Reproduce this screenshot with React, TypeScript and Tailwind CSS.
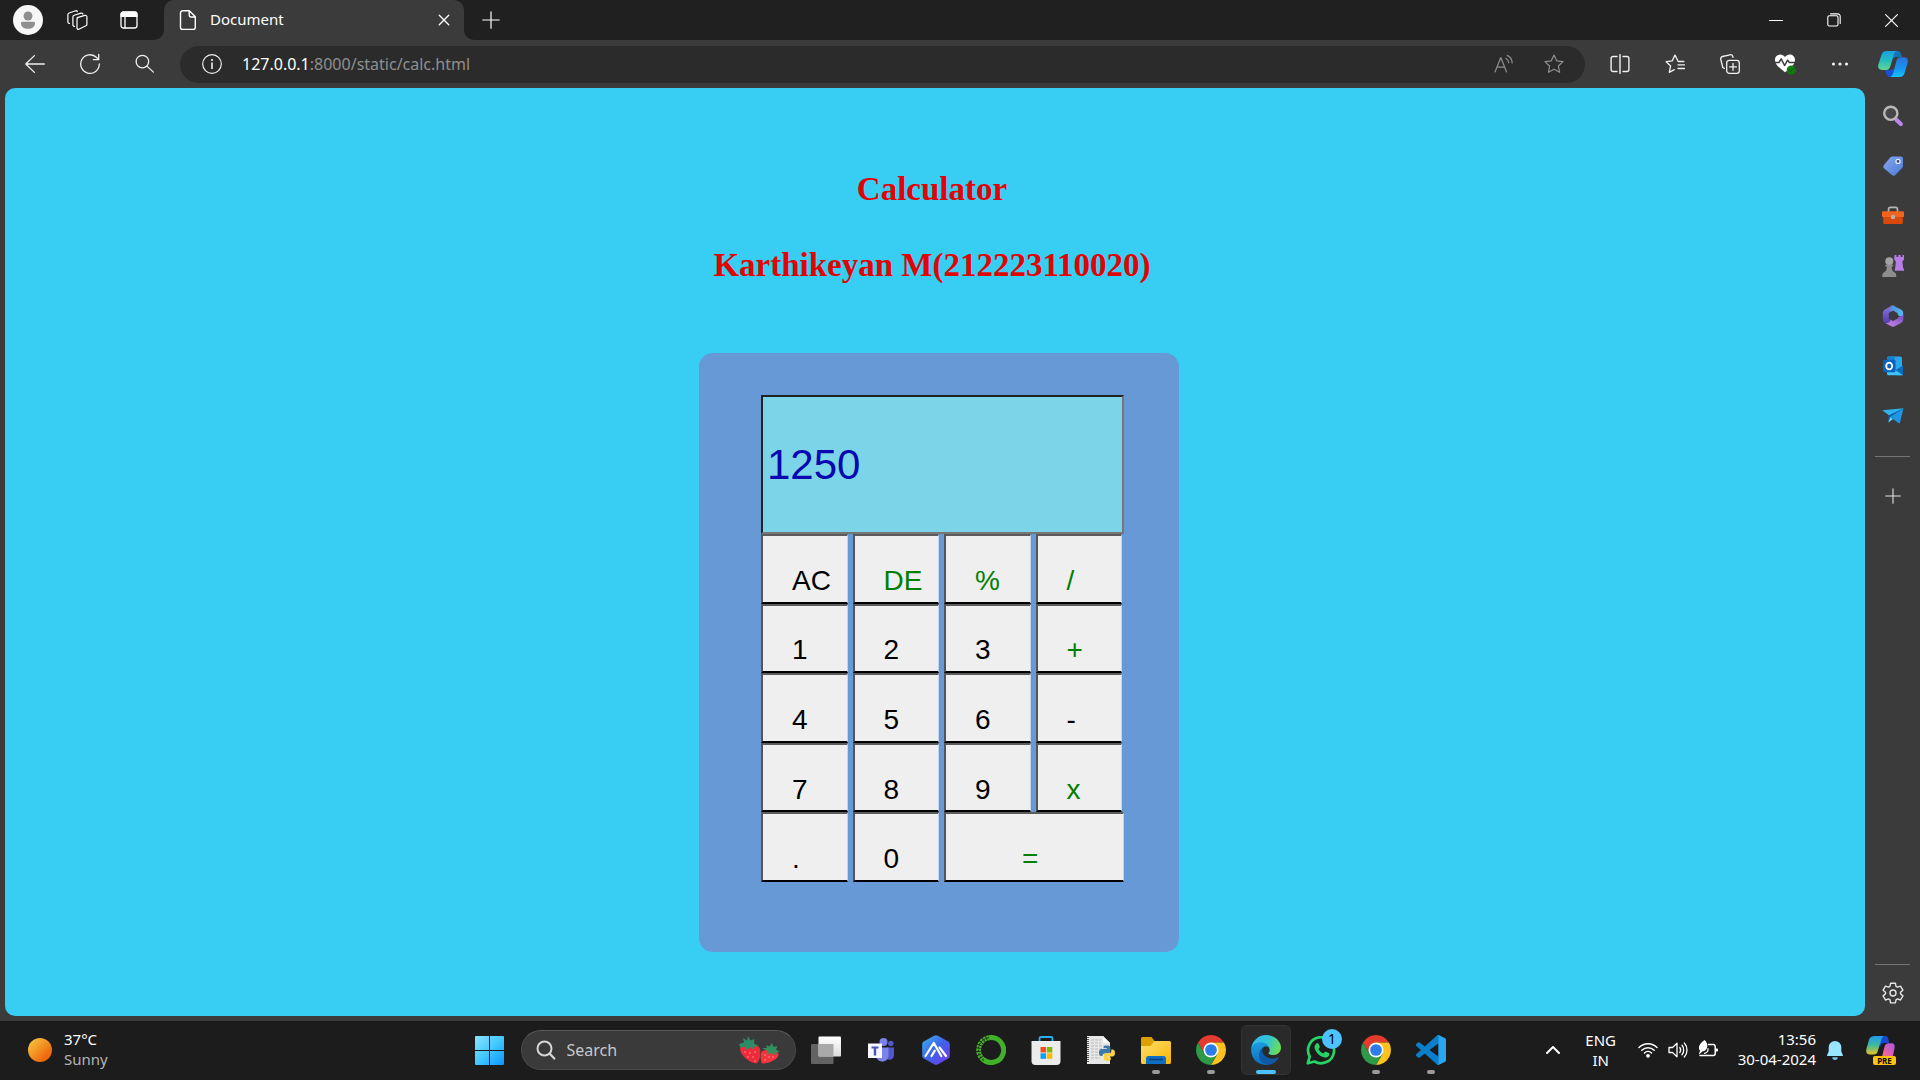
import React from "react";

type IconProps = { className?: string };

const line = {
  fill: "none",
  stroke: "currentColor",
  strokeLinecap: "round" as const,
  strokeLinejoin: "round" as const,
};

function Svg({ size, box, children, className = "" }: { size: number; box?: string; children: React.ReactNode; className?: string }) {
  return (
    <svg width={size} height={size} viewBox={box ?? `0 0 ${size} ${size}`} className={`shrink-0 ${className}`} aria-hidden="true">
      {children}
    </svg>
  );
}

/* ---------- browser icons ---------- */

const AvatarIcon = () => (
  <Svg size={30}>
    <circle cx="15" cy="15" r="15" fill="#f7f7f7" />
    <circle cx="15" cy="11" r="4.5" fill="#8f8f8f" />
    <path d="M8 18.2c0-.8.6-1.4 1.4-1.4h11.2c.8 0 1.4.6 1.4 1.4 0 3.6-3 5.6-7 5.6s-7-2-7-5.6z" fill="#8f8f8f" />
  </Svg>
);

const WorkspacesIcon = () => (
  <Svg size={22}>
    <g {...line} strokeWidth="1.2">
      <path d="M11.2 8.6 19 6.4c1-.3 1.9.4 1.9 1.4v7.600c0 .7-.4 1.200-1 1.400l-7 3.400c-.9.4-1.900-.2-1.900-1.200v-8.900c0-.7.5-1.300 1.200-1.500z" />
      <path d="M8.500 17.300c-.9.2-1.600-.4-1.600-1.300V7.800c0-.7.5-1.300 1.200-1.500l7-2.200c.8-.2 1.600.2 1.800 1" />
      <path d="M4.500 14.700c-.9.1-1.600-.5-1.600-1.300V5.800c0-.7.500-1.300 1.200-1.500l6.500-2.200c.8-.2 1.500.1 1.700.8" transform="translate(-1 -.3)" />
    </g>
  </Svg>
);

const TabActionsIcon = () => (
  <Svg size={18}>
    <rect x="1" y="1" width="16" height="16" rx="2.500" {...line} strokeWidth="1.300" />
    <path d="M.5 6V3A2.500 2.500 0 0 1 3 .5h12A2.500 2.500 0 0 1 17.500 3v3z" fill="currentColor" />
    <path d="M5 6v11" {...line} strokeWidth="1.300" />
  </Svg>
);

const FileIcon = () => (
  <Svg size={20}>
    <path d="M4.500.8h6.800L17.300 6.800v10.600a2 2 0 0 1-2 2H4.500a2 2 0 0 1-2-2V2.800a2 2 0 0 1 2-2zM11.200 1v4.300c0 1 .7 1.700 1.700 1.700h4.200" {...line} strokeWidth="1.400" />
  </Svg>
);

const CrossIcon = ({ size, w }: { size: number; w: number }) => (
  <Svg size={size} box="0 0 14 14">
    <path d="m1.500 1.500 11 11m0-11-11 11" {...line} strokeWidth={w} />
  </Svg>
);

const PlusIcon = ({ size }: { size: number }) => (
  <Svg size={size} box="0 0 18 18">
    <path d="M9 .8v16.400M.8 9h16.400" {...line} strokeWidth="1.200" />
  </Svg>
);

const MinimizeIcon = () => (
  <Svg size={14}>
    <path d="M.5 7.500h13" {...line} strokeWidth="1.100" />
  </Svg>
);

const RestoreIcon = () => (
  <Svg size={14}>
    <g {...line} strokeWidth="1.100">
      <rect x=".8" y="2.800" width="10.200" height="10.200" rx="1.500" />
      <path d="M3.600.9h7.200a2.400 2.400 0 0 1 2.400 2.400v7.200" />
    </g>
  </Svg>
);

const BackIcon = () => (
  <Svg size={20}>
    <path d="M19.400 10H.8M9.400 1.600.8 10l8.600 8.400" {...line} strokeWidth="1.300" />
  </Svg>
);

const ReloadIcon = () => (
  <Svg size={22}>
    <path d="M20.300 11A9.300 9.300 0 1 1 17.600 4.500l2 2M19.700 1.300v5.400h-5.400" {...line} strokeWidth="1.300" />
  </Svg>
);

const SearchIcon = () => (
  <Svg size={20}>
    <path d="M13.700 7.600a6.300 6.300 0 1 1-12.600 0 6.300 6.300 0 0 1 12.600 0zM12 12.100l6.400 6" {...line} strokeWidth="1.300" />
  </Svg>
);

const InfoIcon = () => (
  <Svg size={20}>
    <circle cx="10" cy="10" r="9.300" {...line} strokeWidth="1.200" />
    <path d="M10 9v5.500" {...line} strokeWidth="1.600" />
    <circle cx="10" cy="6" r="1.100" fill="currentColor" />
  </Svg>
);

const ReadAloudIcon = () => (
  <Svg size={20}>
    <path d="M1 18 6.800 3.500 12.600 18M3 13.200h7.700M12 4.400c1.700 1 2.600 2.400 2.700 4.300M13.300 1.400c3 1.500 4.800 4.200 4.900 7.600" {...line} strokeWidth="1.200" />
  </Svg>
);

const StarIcon = () => (
  <Svg size={20}>
    <path d="m10 1 2.700 5.800 6.300.8-4.600 4.400 1.200 6.300L10 15.200l-5.600 3.100L5.600 12 1 7.600l6.300-.8z" {...line} strokeWidth="1.200" />
  </Svg>
);

const SplitIcon = () => (
  <Svg size={20}>
    <path d="M7 2.500H3A1.900 1.900 0 0 0 1.100 4.400v11.200A1.900 1.900 0 0 0 3 17.500h4M13 2.500h4a1.900 1.900 0 0 1 1.900 1.900v11.200a1.900 1.900 0 0 1-1.900 1.900h-4M10 .6v18.800" {...line} strokeWidth="1.400" />
  </Svg>
);

const FavoritesIcon = () => (
  <Svg size={20}>
    <path d="M18.800 7.500h-5.600L10 1 7.200 6.900l-6 .8 4.400 4.300-1.300 6.300 5-2.600M13 10.800h6.500M13 14.500h6.500" {...line} strokeWidth="1.300" />
  </Svg>
);

const CollectionsIcon = () => (
  <Svg size={20}>
    <g {...line} strokeWidth="1.300">
      <rect x="6.700" y="6.300" width="12.600" height="13" rx="2.600" />
      <path d="M13 9.500v6.800M9.600 12.900h6.800M4.300 14.400 2.800 13.500.8 5.500a2.400 2.400 0 0 1 1.700-3L9.900.8a2.400 2.400 0 0 1 2.900 1.700l.2.9" />
    </g>
  </Svg>
);

const HealthIcon = () => (
  <Svg size={22}>
    <path d="M11 4C8-.6.800 1.200 1 7.200c.1 4.800 5.600 8.600 10 12 4.400-3.400 9.900-7.200 10-12C21.200 1.200 14 -.6 11 4z" fill="#fff" />
    <path d="M0 9.500h5l2.200-3.600 3.400 6.600 3-5.300 1.800 2.300H22" {...line} stroke="#3b3b3b" strokeWidth="1.500" />
    <circle cx="17.300" cy="17" r="4.600" fill="#107c10" />
    <path d="m15.600 17 1.300 1.200 2.200-2.400" {...line} stroke="#0a400a" strokeWidth="1" />
  </Svg>
);

const DotsIcon = () => (
  <Svg size={18}>
    <g fill="currentColor">
      <circle cx="2.500" cy="9" r="1.600" />
      <circle cx="9" cy="9" r="1.600" />
      <circle cx="15.500" cy="9" r="1.600" />
    </g>
  </Svg>
);

const CopilotIcon = () => (
  <Svg size={30}>
    <defs>
      <linearGradient id="cpA" x1="0" y1="0" x2="0" y2="1">
        <stop offset="0" stopColor="#1a9fe0" />
        <stop offset=".5" stopColor="#24bcc0" />
        <stop offset="1" stopColor="#62d690" />
      </linearGradient>
      <linearGradient id="cpB" x1="0" y1="0" x2="0" y2="1">
        <stop offset="0" stopColor="#2a72dc" />
        <stop offset=".6" stopColor="#1597f0" />
        <stop offset="1" stopColor="#16c4f8" />
      </linearGradient>
    </defs>
    <path d="M15 2h4.500c2.300 0 3 1.500 3.600 3.300L24 8h-5.500c-3 0-4 2-4.800 5z" fill="#1673b8" />
    <path d="M15 28h-3c-2.500 0-3.300-1.800-4-4l-.8-3h5c3 0 3.700-1.500 4.500-4.500z" fill="#1c4fd8" />
    <path d="M8.500 2H19c-2 .5-2.600 2-3.300 4.200l-3.500 11.300c-.7 2.300-1.700 3.400-4 3.400H4c-3 0-4.500-2-3.700-5.200L3.400 6c.8-2.600 2.400-4 5.100-4z" fill="url(#cpA)" />
    <path d="M21.500 28H12c2-.5 2.700-2 3.300-4.200l3.200-12c.6-2.300 1.800-3.500 4-3.500H26c3 0 4.500 2 3.700 5.200L26.600 24c-.8 2.600-2.400 4-5.100 4z" fill="url(#cpB)" />
  </Svg>
);

/* ---------- sidebar icons ---------- */

const SideSearchIcon = () => (
  <Svg size={22}>
    <path d="m14.600 15 4.200 4" stroke="#bb86f0" strokeWidth="4.200" strokeLinecap="round" />
    <circle cx="8.800" cy="8.300" r="6.600" fill="#45454a" stroke="#b9b9b9" strokeWidth="2.400" />
  </Svg>
);

const ShoppingIcon = () => (
  <Svg size={22}>
    <defs>
      <linearGradient id="tag" x1="0" y1="0" x2="1" y2="1">
        <stop offset="0" stopColor="#86a8ee" />
        <stop offset="1" stopColor="#4c7ad8" />
      </linearGradient>
    </defs>
    <path d="M10.500 1.500h7.800a2.600 2.600 0 0 1 2.700 2.700v6.600c0 .9-.3 1.600-.9 2.200l-6.500 6.800c-1.200 1.200-2.800 1.200-4 0l-7.400-6.200c-1.200-1-1.200-2.600 0-3.800L8.200 2.600c.6-.7 1.400-1.100 2.300-1.100z" fill="url(#tag)" />
    <circle cx="16" cy="6.400" r="2" fill="#2d3d68" stroke="#e4ebfa" strokeWidth="1.300" />
  </Svg>
);

const ToolsIcon = () => (
  <Svg size={22}>
    <path d="M6.500 7V4.500C6.500 3 7.300 2.400 8.500 2.400h5c1.200 0 2 .6 2 2.100V7" fill="none" stroke="#b5b5b5" strokeWidth="1.700" />
    <rect x="1.200" y="11" width="19.600" height="8" rx="1.200" fill="#d9480c" />
    <rect x="0" y="6.300" width="22" height="5.800" rx="1.200" fill="#f0641e" />
    <circle cx="11" cy="12" r="2.200" fill="#b8b0ab" />
  </Svg>
);

const GamesIcon = () => (
  <Svg size={22}>
    <path d="M12.500 0h2v2h1.800V0h2.400v2h1.800V0h1.500v4.600l-1.600 2 .8 6.700c.8.400 1 1.100 1 2.500h-9.600l.6-2.700.600-6.500-1.600-2z" fill="#b67ce8" />
    <circle cx="7.300" cy="6.200" r="4" fill="#a3a3a3" />
    <path d="M3.300 9.800h8v1.800H9.700c0 3 .6 4.400 2.600 5.600 1.600.9 2 1.800 2 4.800H.2c0-3 .4-3.900 2-4.800 2-1.200 2.700-2.600 2.700-5.600H3.300z" fill="#8d8d8d" />
  </Svg>
);

const M365Icon = () => (
  <Svg size={22}>
    <defs>
      <linearGradient id="mA" x1="0" y1="0" x2="0" y2="1">
        <stop offset="0" stopColor="#8a78e0" />
        <stop offset="1" stopColor="#4f37a8" />
      </linearGradient>
      <linearGradient id="mB" x1="0" y1="1" x2="1" y2="0">
        <stop offset="0" stopColor="#d08ae0" />
        <stop offset="1" stopColor="#7b4bc8" />
      </linearGradient>
      <linearGradient id="mC" x1="0" y1="0" x2="1" y2="1">
        <stop offset="0" stopColor="#4a8fe0" />
        <stop offset="1" stopColor="#5cc0f5" />
      </linearGradient>
    </defs>
    <path d="M9.500.8 3 4.500C1.500 5.400.8 6.600.8 8.300v5.900c0 1.700.7 2.900 2.200 3.800l2.500 1.300 3.300-5V7.500l5-4.900L12 .9c-.9-.5-1.700-.6-2.500-.1z" fill="url(#mA)" />
    <path d="M9.500.8c.8-.5 1.700-.4 2.500.1l7 3.700c1.500.8 2.200 2 2.200 3.700v5l-5-3-5.200-3.500L8.800 8V3z" fill="url(#mC)" />
    <path d="M21.200 10v4.200c0 1.700-.7 2.900-2.200 3.700l-5.700 3.200c-1.500.9-3 .9-4.500 0L3 18c4 1 5.500-2.500 5.800-3.500l2.200.8 6-3.300z" fill="url(#mB)" />
    <path d="m11 5.500 4.700 2.800v5.200L11 16l-4.200-2.500V8z" fill="#3b3b3b" />
  </Svg>
);

const OutlookIcon = () => (
  <Svg size={22}>
    <rect x="5" y="1.500" width="15" height="17" rx="1.500" fill="#28a8ea" />
    <path d="M5 3a1.500 1.500 0 0 1 1.500-1.500h6V8H5z" fill="#1583d2" />
    <path d="m21 10.500-9 5.500 2 4.300h5.500a1.500 1.500 0 0 0 1.500-1.500z" fill="#1490df" />
    <path d="M5 12v6.800c0 .9.600 1.500 1.500 1.500H21L9 12.500z" fill="#3cc4f5" />
    <path d="m21 10.500-7 4.400 6.600 4.800.4-.9z" fill="#0f6cbd" />
    <rect x="1" y="4.800" width="12.500" height="12.500" rx="1.300" fill="#0a62bf" />
    <ellipse cx="7.200" cy="11" rx="3" ry="3.400" fill="none" stroke="#fff" strokeWidth="1.800" />
  </Svg>
);

const PlaneIcon = () => (
  <Svg size={22}>
    <path d="M.3 5.200 21.500 3.300 8 13.300l-1.200-3z" fill="#2fb1ec" />
    <path d="M21.500 3.300 6.500 10.500l-.2 7z" fill="#0b62a8" />
    <path d="M21.500 3.300 8.300 12l8.500 6.300c.6.300 1 .1 1.200-.6z" fill="#1e96e0" />
    <path d="M8.300 12 6.300 17.500l4.500-3.300z" fill="#6fd0f7" />
  </Svg>
);

const GearIcon = () => (
  <Svg size={24}>
    <g {...line} strokeWidth="1.400">
      <path d="M9.600 2.200h4.800l.6 3.100 1.500.9 3-1.100 2.400 4.100-2.400 2.100v1.500l2.400 2.100-2.400 4.100-3-1.100-1.500.9-.6 3.100H9.600L9 18.800l-1.500-.9-3 1.100-2.400-4.100 2.400-2.100v-1.500L2.100 9.200l2.400-4.100 3 1.100L9 5.300z" />
      <circle cx="12" cy="12" r="3" />
    </g>
  </Svg>
);

/* ---------- taskbar icons ---------- */

const StartIcon = () => (
  <Svg size={29}>
    <defs>
      <linearGradient id="win" gradientUnits="userSpaceOnUse" x1="0" y1="0" x2="29" y2="29">
        <stop offset="0" stopColor="#8ce2ff" />
        <stop offset=".5" stopColor="#43c8ff" />
        <stop offset="1" stopColor="#0a94ff" />
      </linearGradient>
    </defs>
    <path d="M1 0h13v14H0V1a1 1 0 0 1 1-1zM15 0h13a1 1 0 0 1 1 1v13H15zM0 15h14v14H1a1 1 0 0 1-1-1zM15 15h14v13a1 1 0 0 1-1 1H15z" fill="url(#win)" />
  </Svg>
);

const StrawberriesIcon = () => (
  <svg width="42" height="28" viewBox="0 0 42 28" className="shrink-0" aria-hidden="true">
    <path d="M1 12c3-5 18-5 20 1 1.500 6-1 13-3.500 14.500C11 27 1 20 1 12z" fill="#ee2b3c" />
    <path d="M22.500 16c3-4 15-2 17 2 .5 4-7 9-16 9.500-2-1-2.500-8-1-11.500z" fill="#f2343f" />
    <path d="m0 8 5-1.500L4 2l4 2.500L9 0l2.500 4.500 4-1.500L15 7.500l5 2.500-4.500.5L15 14l-4-3-3 3.500-1.500-4L1.500 12z" fill="#2f8a66" />
    <path d="m23 12 5 0-1-3 3.500 1.500L33 7l1.500 4 4-1-1.500 3.500 4 2.500-4 .5-.5 3-3.500-2.500-3.500 1.500-.5-3.500z" fill="#358f5c" />
    <g fill="#ffb08a">
      <circle cx="6" cy="16" r=".7" />
      <circle cx="11" cy="17" r=".7" />
      <circle cx="16" cy="16" r=".7" />
      <circle cx="9" cy="21" r=".7" />
      <circle cx="14" cy="21" r=".7" />
      <circle cx="16" cy="25" r=".7" />
      <circle cx="26" cy="19" r=".7" />
      <circle cx="30" cy="21" r=".7" />
      <circle cx="26" cy="24" r=".7" />
      <circle cx="34" cy="21" r=".7" />
    </g>
  </svg>
);

const TaskViewIcon = () => (
  <Svg size={30}>
    <defs>
      <linearGradient id="tv" x1="0" y1="0" x2="0" y2="1">
        <stop offset="0" stopColor="#fff" />
        <stop offset="1" stopColor="#dcdcdc" />
      </linearGradient>
    </defs>
    <rect x="0" y="9" width="22.500" height="20" rx="1" fill="#636363" />
    <rect x="7.500" y="1.500" width="22.500" height="20" rx="1" fill="url(#tv)" />
    <path d="M7.500 9h15v12.500h-14a1 1 0 0 1-1-1z" fill="#a9a9a9" />
  </Svg>
);

const TeamsIcon = () => (
  <Svg size={28}>
    <circle cx="16.500" cy="6" r="4" fill="#7b83eb" />
    <circle cx="23.800" cy="7.500" r="2.700" fill="#5059c9" />
    <path d="M20 11.500h7V19c0 3-2 4.800-4.600 4.800-1.500 0-2.400-.5-2.400-.5z" fill="#5059c9" />
    <path d="M10.500 11.500H21.500V19c0 3.800-2.600 6.500-6 6.500s-6-2.200-6.500-5.500z" fill="#7b83eb" />
    <rect x="1" y="7.500" width="14" height="14.500" fill="#f8f9ff" />
    <path d="M4.500 10.500h7v2H9.200v7H6.800v-7H4.500z" fill="#4b53bc" />
  </Svg>
);

const HexIcon = () => (
  <Svg size={30}>
    <defs>
      <linearGradient id="hex" x1="0" y1="0" x2="1" y2="1">
        <stop offset="0" stopColor="#3cb4ee" />
        <stop offset=".5" stopColor="#3f62e8" />
        <stop offset="1" stopColor="#7b35ec" />
      </linearGradient>
    </defs>
    <path d="M13 .8c1.300-.7 2.700-.7 4 0l9.800 5.400c1.300.7 2 1.800 2 3.300v11c0 1.500-.7 2.600-2 3.300L17 29.200c-1.300.7-2.700.7-4 0l-9.800-5.400c-1.300-.7-2-1.800-2-3.300v-11c0-1.500.7-2.600 2-3.300z" fill="url(#hex)" />
    <path d="M4.500 21 12.800 8l7.500 13M10.500 21l3.300-5.300M18.500 12.500 25 21" fill="none" stroke="#fff" strokeWidth="2.200" strokeLinecap="round" strokeLinejoin="round" />
  </Svg>
);

const AnacondaIcon = () => (
  <Svg size={30}>
    <path d="M13 2.700A12.500 12.500 0 1 1 7 24.500" fill="none" stroke="#43b02a" strokeWidth="5" />
    <path d="M7 24.500A12.500 12.500 0 0 1 13 2.700" fill="none" stroke="#43b02a" strokeWidth="5" strokeDasharray="2.400 .8" />
    <path d="M8 25.500A12.500 12.500 0 0 1 14 2.500" fill="none" stroke="#1d1d1d" strokeWidth="1" strokeDasharray="2 1.500" />
  </Svg>
);

const StoreIcon = () => (
  <Svg size={30}>
    <path d="M8.500 7V3.500A1.500 1.500 0 0 1 10 2h10a1.500 1.500 0 0 1 1.500 1.500V7" fill="none" stroke="#2ab0f2" strokeWidth="1.800" />
    <path d="M.5 6h29v20a4 4 0 0 1-4 4h-21a4 4 0 0 1-4-4z" fill="#ececec" />
    <path d="M9.500 12H15v5.500H9.500z" fill="#f25022" />
    <path d="M15.800 12h5.500v5.500h-5.500z" fill="#7fba00" />
    <path d="M9.500 18.300H15v5.500H9.500z" fill="#00a4ef" />
    <path d="M15.800 18.300h5.500v5.500h-5.500z" fill="#ffb900" />
  </Svg>
);

const PythonFileIcon = () => (
  <Svg size={30}>
    <path d="M1 1h16l7 7v21H1z" fill="#e6e6e6" />
    <path d="M17 1v7h7z" fill="#fafafa" />
    <path d="M2 2v26" stroke="#555" strokeWidth="2" strokeDasharray="1 1" />
    <path d="M5 5h10M5 8h10M5 11h16M5 14h12M5 17h9M5 20h9M5 23h9" stroke="#b9b9b9" strokeWidth="1" strokeDasharray="3 1" />
    <path d="M17.500 12.500c0-1.600 1.400-2 3.500-2s3.500.6 3.500 2.500v3.200c0 1.400-.9 2.200-2.300 2.200h-3.400c-1.600 0-2.400 1-2.400 2.700h-1.300c-1.500 0-2.100-1.500-2.100-3.600s.9-3.500 2.500-3.500h5.500v-.8h-3.500z" fill="#3c78aa" />
    <path d="M25.300 14.500h1.200c1.700 0 2.500 1.500 2.500 3.600s-.9 3.400-2.500 3.400h-5v.9h3.400v1.300c0 1.500-1.400 2.300-3.500 2.300s-3.600-.8-3.600-2.500v-3.200c0-1.200.9-2.100 2.300-2.100h3.300c1.200 0 1.900-1 1.900-2.400z" fill="#ffd342" />
  </Svg>
);

const FolderIcon = () => (
  <Svg size={30}>
    <defs>
      <linearGradient id="fold" x1="0" y1="0" x2="1" y2="1">
        <stop offset="0" stopColor="#ffdf70" />
        <stop offset="1" stopColor="#f7b500" />
      </linearGradient>
    </defs>
    <path d="M0 3.500A1.500 1.500 0 0 1 1.500 2h9l3 4H29v6H0z" fill="#dca000" />
    <path d="M0 11h9.500l4-5H28.500A1.500 1.500 0 0 1 30 7.500v20a1.500 1.500 0 0 1-1.500 1.500h-27A1.500 1.500 0 0 1 0 27.500z" fill="url(#fold)" />
    <path d="M5 29v-5.500A2.500 2.500 0 0 1 7.500 21h15a2.500 2.500 0 0 1 2.500 2.500V29z" fill="#0f6fc5" />
    <path d="M8.500 24.500h13" stroke="#053f7d" strokeWidth="1.300" strokeLinecap="round" />
  </Svg>
);

const ChromeIcon = () => (
  <Svg size={30} box="2 2 44 44">
    <path d="M4.950 13A22 22 0 0 1 43.050 13H24L14.470 29.500Z" fill="#e33b2e" />
    <path d="M43.050 13A22 22 0 0 1 24 46L33.530 29.500 24 13Z" fill="#fcc31e" />
    <path d="M24 46A22 22 0 0 1 4.950 13L14.470 29.500H33.530Z" fill="#2c9a47" />
    <circle cx="24" cy="24" r="11" fill="#fff" />
    <circle cx="24" cy="24" r="8.600" fill="#2b7de9" />
  </Svg>
);

const EdgeIcon = () => (
  <Svg size={30} box="4 4 257 257">
    <defs>
      <linearGradient id="eA" x1="0" y1="0" x2="1" y2="0">
        <stop offset="0" stopColor="#0c59a4" />
        <stop offset="1" stopColor="#1259a8" />
      </linearGradient>
      <linearGradient id="eB" x1=".4" y1="0" x2=".5" y2="1">
        <stop offset="0" stopColor="#1b9de2" />
        <stop offset=".5" stopColor="#1688d0" />
        <stop offset="1" stopColor="#0a6cc0" />
      </linearGradient>
      <linearGradient id="eC" x1="0" y1=".3" x2="1" y2=".6">
        <stop offset="0" stopColor="#35b8f1" />
        <stop offset=".5" stopColor="#30c4d6" />
        <stop offset="1" stopColor="#6ee04e" />
      </linearGradient>
    </defs>
    <path d="M235.680 195.460a93.730 93.730 0 0 1-10.540 4.710 101.870 101.870 0 0 1-35.900 6.460c-47.320 0-88.540-32.550-88.540-74.320A31.480 31.480 0 0 1 117.130 105c-42.800 1.800-53.800 46.400-53.800 72.530 0 73.880 68.090 81.370 82.760 81.370 7.910 0 19.840-2.300 27-4.560l1.310-.44a128.340 128.340 0 0 0 66.600-52.800 4 4 0 0 0-5.320-5.640z" fill="url(#eA)" />
    <path d="M110.340 246.340A79.200 79.200 0 0 1 87.600 225a80.720 80.720 0 0 1 29.530-120c3.120-1.470 8.450-4.130 15.540-4a32.350 32.350 0 0 1 25.690 13 31.880 31.880 0 0 1 6.360 18.660c0-.21 24.460-79.600-80-79.600-43.900 0-80 41.660-80 78.210a130.150 130.150 0 0 0 12.110 56 128 128 0 0 0 156.380 67.110 75.550 75.550 0 0 1-62.780-8z" fill="url(#eB)" />
    <path d="M156.940 153.780c-.81 1.050-3.300 2.500-3.300 5.660 0 2.610 1.700 5.120 4.720 7.230 14.380 10 41.490 8.680 41.560 8.680a59.560 59.560 0 0 0 30.270-8.350 61.380 61.380 0 0 0 30.430-52.880c.26-22.410-8-37.310-11.340-43.910C228.090 28.760 182.350 4.920 132.610 4.920a128 128 0 0 0-128 126.200c.48-36.540 36.800-66.050 80-66.050 3.500 0 23.460.34 42 10.070 16.340 8.580 24.900 18.940 30.850 29.210 6.180 10.670 7.280 24.150 7.280 29.520s-2.740 13.330-7.800 19.910z" fill="url(#eC)" />
  </Svg>
);

const WhatsAppIcon = () => (
  <Svg size={30}>
    <path d="m1.800 28.300 1.900-6.700A13 13 0 1 1 8.500 26.500z" fill="none" stroke="#25d366" strokeWidth="2.700" strokeLinejoin="round" />
    <path d="M10.600 8.300c.6-.5 1.500-.4 1.900.4l1.200 2.600c.2.500.1 1-.2 1.400l-1.100 1.300c1.200 2.200 2.700 3.600 5 4.600l1.300-1.500c.4-.4.900-.5 1.400-.3l2.500 1.200c.7.400.9 1 .7 1.700-.5 2-2.400 3.100-4.400 2.800-5.200-.9-9.500-5.200-10.300-9.400-.3-1.900.6-3.600 2-4.800z" fill="#25d366" />
  </Svg>
);

const VsCodeIcon = () => (
  <Svg size={30} box="0 0 24 24">
    <path
      d="M23.150 2.587L18.210.21a1.494 1.494 0 0 0-1.705.29l-9.460 8.630-4.120-3.128a.999.999 0 0 0-1.276.057L.327 7.261A1 1 0 0 0 .326 8.740L3.899 12 .326 15.260a1 1 0 0 0 .001 1.479L1.650 17.940a.999.999 0 0 0 1.276.057l4.120-3.128 9.460 8.630a1.492 1.492 0 0 0 1.704.29l4.942-2.377A1.500 1.500 0 0 0 24 20.060V3.939a1.500 1.500 0 0 0-.85-1.352zm-5.146 14.861L10.826 12l7.178-5.448v10.896z"
      fill="#0b7fcb"
    />
    <path d="M23.150 2.587 18.210.21c-.3-.15-.6-.17-.9-.1.400.1.690.5.690.990v21.800c0 .5-.3.900-.7 1 .3.050.6.030.9-.110l4.942-2.377A1.500 1.500 0 0 0 24 20.060V3.939a1.500 1.500 0 0 0-.85-1.352z" fill="#2ba6f0" />
  </Svg>
);

const TrayChevron = () => (
  <Svg size={14}>
    <path d="m1 10 6-6 6 6" {...line} strokeWidth="2" />
  </Svg>
);

const WifiIcon = () => (
  <Svg size={20}>
    <g {...line} strokeWidth="1.500">
      <path d="M1 7.500a12.700 12.700 0 0 1 18 0" />
      <path d="M3.800 10.300a8.800 8.800 0 0 1 12.400 0" />
      <path d="M6.500 13a5 5 0 0 1 7 0" />
    </g>
    <circle cx="10" cy="15.800" r="1.900" fill="currentColor" />
  </Svg>
);

const VolumeIcon = () => (
  <Svg size={20}>
    <path d="M1 7.500h3.500L9 3.200v13.600l-4.500-4.300H1zM11.800 7.500c1.100 1.500 1.100 3.500 0 5M14 5.300c2.300 2.600 2.300 6.800 0 9.400M16.300 3c3.600 3.900 3.600 10.100 0 14" {...line} strokeWidth="1.300" />
  </Svg>
);

const BatteryIcon = () => (
  <Svg size={20}>
    <path d="M10.500 4.500h4.700a2 2 0 0 1 2 2v7a2 2 0 0 1-2 2H2" {...line} strokeWidth="1.500" />
    <path d="M17.500 8.500h1.700c.5 0 .8.300.8.800v1.400c0 .5-.3.800-.8.800h-1.700z" fill="currentColor" />
    <path d="M6.500 0c2.200 2 3 4 2.800 6.500-.2 3-2.300 4.800-5 5L1 14.500c0-1.500.5-2.500 1.200-3.400C-1 7 2 3.500 6.500 0z" fill="currentColor" />
    <path d="M10 8.500c.5 2.500-1 4.500-3.500 4.800" {...line} strokeWidth="1.200" />
  </Svg>
);

const BellIcon = () => (
  <Svg size={20}>
    <path d="M10 1a6.300 6.300 0 0 1 6.300 6.300v4.200l1.600 3.500c.2.600-.1 1-.7 1H2.800c-.6 0-.9-.4-.7-1l1.600-3.500V7.300A6.300 6.300 0 0 1 10 1z" fill="#98e6ff" />
    <path d="M7.300 17.200h5.400a2.700 2.700 0 0 1-5.400 0z" fill="#7cc9e3" />
  </Svg>
);

const CopilotPreIcon = () => (
  <Svg size={30}>
    <defs>
      <linearGradient id="prA" x1="0" y1="0" x2="0" y2="1">
        <stop offset="0" stopColor="#1f9af0" />
        <stop offset=".5" stopColor="#3fb99a" />
        <stop offset="1" stopColor="#e8c520" />
      </linearGradient>
      <linearGradient id="prB" x1="1" y1="0" x2="0" y2="1">
        <stop offset="0" stopColor="#a457ea" />
        <stop offset=".5" stopColor="#e860a8" />
        <stop offset="1" stopColor="#f98a62" />
      </linearGradient>
    </defs>
    <path d="M14 1h5c2.500 0 3 1.500 3.500 3.500L23 8h-5c-2 0-3 1-4 4z" fill="#1648d0" />
    <path d="M8.500 1h10c-2 .5-2.600 2-3.300 4.200l-3.500 11c-.7 2.300-1.700 3.300-4 3.300H4c-3 0-4.300-2-3.700-5L2.900 5C3.700 2.400 5.800 1 8.500 1z" fill="url(#prA)" />
    <path d="M21.500 26H13c1.600-.5 2.400-2 3-4.200l2.500-10c.6-2.300 1.800-3.500 4-3.500h2.800c3 0 3.900 2 3.200 5.200L26.600 22c-.8 2.600-2.400 4-5.100 4z" fill="url(#prB)" />
  </Svg>
);

/* ---------- browser chrome ---------- */

function IconButton({ label, className = "", children }: { label: string; className?: string; children: React.ReactNode }) {
  return (
    <button type="button" aria-label={label} className={`flex shrink-0 items-center justify-center ${className}`}>
      {children}
    </button>
  );
}

function TabStrip() {
  return (
    <header className="flex h-10 shrink-0 text-white">
      <div className="flex w-[164px] items-center rounded-br-[10px] bg-[#202020]">
        <IconButton label="Profile" className="ml-[3px] w-[50px]"><AvatarIcon /></IconButton>
        <IconButton label="Workspaces" className="w-12"><WorkspacesIcon /></IconButton>
        <IconButton label="Tab actions" className="w-14"><TabActionsIcon /></IconButton>
      </div>
      <div className="w-[300px] bg-linear-to-b from-[#202020] from-50% to-[#3b3b3b] to-50%">
        <div className="flex h-full items-center rounded-t-[10px] bg-[#3b3b3b] pr-[10px] pl-[14px]">
          <FileIcon />
          <span className="ml-3 flex-1 pb-0.5 text-[15px] leading-5">Document</span>
          <IconButton label="Close tab" className="w-5"><CrossIcon size={12} w={1.5} /></IconButton>
        </div>
      </div>
      <div className="flex flex-1 items-center rounded-bl-[10px] bg-[#202020]">
        <IconButton label="New tab" className="h-full w-[54px]"><PlusIcon size={18} /></IconButton>
        <div className="flex-1" />
        <IconButton label="Minimize" className="h-full w-[58px]"><MinimizeIcon /></IconButton>
        <IconButton label="Restore" className="h-full w-[57px]"><RestoreIcon /></IconButton>
        <IconButton label="Close" className="h-full w-[58px]"><CrossIcon size={15} w={1.1} /></IconButton>
      </div>
    </header>
  );
}

function Toolbar() {
  return (
    <nav className="flex h-12 shrink-0 items-center text-[#f0f0f0]">
      <IconButton label="Back" className="ml-[7px] w-[55px]"><BackIcon /></IconButton>
      <IconButton label="Refresh" className="w-[55px]"><ReloadIcon /></IconButton>
      <IconButton label="Search" className="w-[55px]"><SearchIcon /></IconButton>
      <div className="ml-2 flex h-[37px] flex-1 items-center rounded-full bg-[#2b2b2b] pr-[6px] pl-[22px]">
        <IconButton label="Site information" className="w-5"><InfoIcon /></IconButton>
        <div role="textbox" aria-label="Address" className="ml-5 flex-1 text-base text-[#8f8f8f]">
          <span className="text-white">127.0.0.1</span>:8000/static/calc.html
        </div>
        <IconButton label="Read aloud" className="w-[50px] text-[#8f8f8f]"><ReadAloudIcon /></IconButton>
        <IconButton label="Add to favorites" className="w-[50px] text-[#8f8f8f]"><StarIcon /></IconButton>
      </div>
      <IconButton label="Split screen" className="ml-[7px] w-[55px]"><SplitIcon /></IconButton>
      <IconButton label="Favorites" className="w-[55px]"><FavoritesIcon /></IconButton>
      <IconButton label="Collections" className="w-[55px]"><CollectionsIcon /></IconButton>
      <IconButton label="Browser essentials" className="w-[55px]"><HealthIcon /></IconButton>
      <IconButton label="Settings and more" className="w-[55px]"><DotsIcon /></IconButton>
      <IconButton label="Copilot" className="mr-[1px] w-[52px]"><CopilotIcon /></IconButton>
    </nav>
  );
}

const sideItems: { label: string; Icon: React.FC<IconProps> }[] = [
  { label: "Search", Icon: SideSearchIcon },
  { label: "Shopping", Icon: ShoppingIcon },
  { label: "Tools", Icon: ToolsIcon },
  { label: "Games", Icon: GamesIcon },
  { label: "Microsoft 365", Icon: M365Icon },
  { label: "Outlook", Icon: OutlookIcon },
  { label: "Drop", Icon: PlaneIcon },
];

function Sidebar() {
  return (
    <aside className="flex w-[55px] shrink-0 flex-col items-center pt-[3px] text-[#e6e6e6]">
      {sideItems.map(({ label, Icon }) => (
        <IconButton key={label} label={label} className="h-[50px] w-full"><Icon /></IconButton>
      ))}
      <div className="mt-[15px] h-px w-[35px] bg-[#757575]" />
      <IconButton label="Customize" className="mt-[14px] h-[50px] w-full"><PlusIcon size={16} /></IconButton>
      <div className="flex-1" />
      <div className="h-px w-[35px] bg-[#757575]" />
      <IconButton label="Settings" className="h-14 w-full"><GearIcon /></IconButton>
    </aside>
  );
}

/* ---------- page ---------- */

const keys: { text: string; green?: boolean; wide?: boolean }[] = [
  { text: "AC" }, { text: "DE", green: true }, { text: "%", green: true }, { text: "/", green: true },
  { text: "1" }, { text: "2" }, { text: "3" }, { text: "+", green: true },
  { text: "4" }, { text: "5" }, { text: "6" }, { text: "-" },
  { text: "7" }, { text: "8" }, { text: "9" }, { text: "x", green: true },
  { text: "." }, { text: "0" }, { text: "=", green: true, wide: true },
];

function Calculator() {
  return (
    <form className="rounded-[14px] bg-[#6699d6] pt-[42px] pr-[55px] pb-[70px] pl-[62px] font-['Liberation_Sans',Arial,sans-serif]">
      <input
        aria-label="Result"
        readOnly
        value="1250"
        className="block h-[139px] w-[363px] border-2 border-t-[#222] border-r-[#767676] border-b-[#767676] border-l-[#222] bg-[#7cd4e8] px-1 text-[42px] text-[#0808b0] outline-none"
      />
      <div className="grid h-[348px] w-[361px] grid-cols-4 grid-rows-5 gap-x-[5px]">
        {keys.map((k) => (
          <button
            key={k.text}
            type="button"
            className={`border-2 border-r border-t-[#5c5c5c] border-r-[#c4d4ea] border-b-black border-l-[#555] bg-[#efefef] pt-[24px] text-left text-[28px] leading-8 ${
              k.green ? "text-[#008000]" : "text-black"
            } ${k.wide ? "col-span-2 -mr-0.5 pl-[76px]" : "pl-[29px]"}`}
          >
            {k.text}
          </button>
        ))}
      </div>
    </form>
  );
}

function Page() {
  return (
    <main className="mb-[5px] ml-[5px] flex flex-1 flex-col items-center rounded-[10px] bg-[#38cef4] pt-[82px] pb-16">
      <h1 className="mr-[6px] font-['Liberation_Serif','Times_New_Roman',serif] text-[33px] leading-[38px] font-bold text-[#e00505]">Calculator</h1>
      <h1 className="mt-[38px] mr-[6px] font-['Liberation_Serif','Times_New_Roman',serif] text-[33px] leading-[38px] font-bold text-[#e00505]">
        Karthikeyan M(212223110020)
      </h1>
      <div className="mt-[69px] ml-2">
        <Calculator />
      </div>
    </main>
  );
}

/* ---------- taskbar ---------- */

type App = { label: string; Icon: React.FC<IconProps>; running?: boolean; active?: boolean; badge?: string };

const apps: App[] = [
  { label: "Task view", Icon: TaskViewIcon },
  { label: "Teams", Icon: TeamsIcon },
  { label: "Assistant", Icon: HexIcon },
  { label: "Anaconda", Icon: AnacondaIcon },
  { label: "Microsoft Store", Icon: StoreIcon },
  { label: "IDLE", Icon: PythonFileIcon },
  { label: "File Explorer", Icon: FolderIcon, running: true },
  { label: "Chrome", Icon: ChromeIcon, running: true },
  { label: "Edge", Icon: EdgeIcon, active: true },
  { label: "WhatsApp", Icon: WhatsAppIcon, badge: "1" },
  { label: "Chrome profile", Icon: ChromeIcon, running: true },
  { label: "Visual Studio Code", Icon: VsCodeIcon, running: true },
];

function Taskbar() {
  return (
    <footer className="flex h-[59px] shrink-0 items-center bg-[#1c1c1c] pb-px text-[15px] leading-5 text-white">
      <div className="flex flex-1 items-center">
        <button type="button" className="ml-7 flex items-center gap-3 text-left">
          <span className="size-6 rounded-full bg-linear-to-br from-[#f3c23a] from-10% to-[#ee6a0c] to-75%" />
          <span className="flex flex-col pb-0.5">
            <span>37°C</span>
            <span className="text-[#b4b4b4]">Sunny</span>
          </span>
        </button>
      </div>

      <div className="flex items-center">
        <IconButton label="Start" className="mr-1 h-[50px] w-[55px]"><StartIcon /></IconButton>
        <label className="mr-[3px] flex h-10 w-[275px] items-center rounded-full border border-[#4a4a4a] border-t-[#5c5c5c] bg-[#3a3a3a] pr-[14px] pl-[14px]">
          <Svg size={20}>
            <circle cx="8.500" cy="8.500" r="7" fill="none" stroke="#d6d6d6" strokeWidth="2" />
            <path d="m13.800 13.800 4.500 4.700" stroke="#d6d6d6" strokeWidth="2.200" strokeLinecap="round" />
          </Svg>
          <input type="search" aria-label="Search" placeholder="Search" className="ml-[11px] w-0 flex-1 bg-transparent text-base outline-none placeholder:text-[#c8c8c8]" />
          <StrawberriesIcon />
        </label>
        {apps.map(({ label, Icon, running, active, badge }) => (
          <div key={label} className="flex w-[55px] justify-center">
            <button
              type="button"
              aria-label={label}
              className={`relative flex size-[50px] items-center justify-center rounded-md border ${active ? "border-[#333] bg-[#2a2a2a]" : "border-transparent"}`}
            >
              <Icon />
              {running && <span className="absolute bottom-0 h-1 w-2 rounded-full bg-[#9a9a9a]" />}
              {active && <span className="absolute bottom-0 h-1 w-5 rounded-full bg-[#4cc2ff]" />}
              {badge && (
                <span className="absolute top-[3px] right-[3px] flex size-5 items-center justify-center rounded-full bg-[#4cc2ff] text-sm text-black">{badge}</span>
              )}
            </button>
          </div>
        ))}
      </div>

      <div className="flex flex-1 items-center justify-end">
        <IconButton label="Show hidden icons" className="w-8"><TrayChevron /></IconButton>
        <button type="button" className="ml-3 w-10 text-center">ENG<br />IN</button>
        <button type="button" aria-label="Network, volume and battery" className="ml-[17px] flex items-center gap-[10px]">
          <WifiIcon />
          <VolumeIcon />
          <BatteryIcon />
        </button>
        <button type="button" className="ml-5 pb-0.5 text-right">13:56<br />30-04-2024</button>
        <IconButton label="Notifications" className="ml-[9px]"><BellIcon /></IconButton>
        <button type="button" aria-label="Copilot preview" className="relative mr-6 ml-[21px]">
          <CopilotPreIcon />
          <span className="absolute right-0 bottom-0 flex h-[9px] w-[23px] items-center justify-center rounded-[2px] bg-[#ffc20a] text-[8px] leading-none font-bold text-black">PRE</span>
        </button>
      </div>
    </footer>
  );
}

export default function App() {
  return (
    <div className="flex min-h-screen flex-col bg-[#3b3b3b] font-['Noto_Sans','Segoe_UI',sans-serif]">
      <TabStrip />
      <Toolbar />
      <div className="flex flex-1">
        <Page />
        <Sidebar />
      </div>
      <Taskbar />
    </div>
  );
}
